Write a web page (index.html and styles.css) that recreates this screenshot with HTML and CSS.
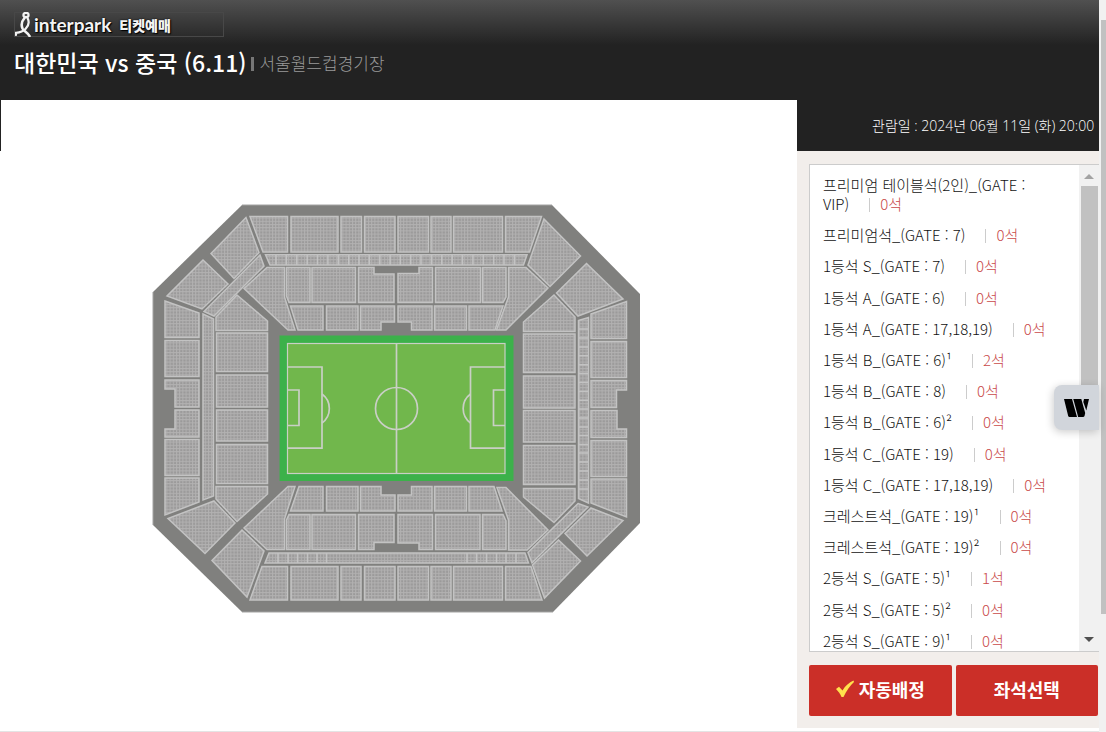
FILE: index.html
```html
<!DOCTYPE html>
<html lang="ko">
<head>
    <meta charset="UTF-8">
    <meta name="viewport" content="width=device-width, initial-scale=1.0">
    <title>인터파크 티켓예매</title>
    <link rel="stylesheet" href="styles.css">
</head>
<body>
    <div class="page">
        <header class="header">
            <a class="logo" href="#">
                <svg class="logo-mark" viewBox="0 0 18 25" aria-hidden="true">
                    <g fill="none" stroke="#f4f4f4" stroke-linecap="round">
                        <ellipse cx="11" cy="3" rx="2.600" ry="2.200" stroke-width="2.200"/>
                        <path d="M9.500 6C6.500 9.500 6 13 7.500 16.500C9 19.500 12.500 20 14.500 24" stroke-width="2.600"/>
                        <path d="M12.500 6C14.600 10 13.500 14 10.500 17C7.500 20.200 4.800 20.500 1 20.800V23" stroke-width="2.200"/>
                    </g>
                </svg>
                <span class="logo-name">interpark</span>
                <span class="logo-service">티켓예매</span>
            </a>
            <div class="title-row">
                <h1>대한민국 vs 중국 (6.11)</h1>
                <span class="venue">서울월드컵경기장</span>
            </div>
        </header>

        <div class="content">
            <main class="seat-map">
                <svg class="stadium" viewBox="152 204 489 409" role="img" aria-label="좌석 배치도">
                    <defs>
                        <pattern id="seats" width="3.200" height="3.200" patternUnits="userSpaceOnUse">
                            <rect width="3.200" height="3.200" fill="#9b9a9a"/>
                            <path d="M0 .5H3.200M.5 0V3.200" stroke="#b2b1b1" stroke-width="1"/>
                        </pattern>
                    </defs>
                    <path d="M242 205H552L640 294V523L553 612H242L153 525V292Z" fill="#80807e"/>
                    <path d="M242 205H552M153 292V525M242 612H553" stroke="#a3a3a2" fill="none"/>

                    <g fill="url(#seats)" stroke="#c3c3c3" stroke-width="1.500">
                        <!-- north stand -->
                        <path d="M250 216.500H287.500V252H263Z"/>
                        <path d="M291 216.500H338V252H291Z"/>
                        <path d="M341 216.500H361.500V252H341Z"/>
                        <path d="M364.500 216.500H395V252H364.500Z"/>
                        <path d="M398 216.500H428.500V252H398Z"/>
                        <path d="M431 216.500H451V252H431Z"/>
                        <path d="M453.500 216.500H502.500V252H453.500Z"/>
                        <path d="M505.500 216.500H541.500L529.500 252H505.500Z"/>
                        <path d="M265.500 254.800H527L523.500 265H270Z"/>
                        <path d="M276 255V265M286.400 255V265M296.800 255V265M307.200 255V265M317.500 255V265M327.900 255V265M338.300 255V265M348.700 255V265M359 255V265M369.400 255V265M379.800 255V265M390.100 255V265M400.300 255V265M410.700 255V265M421 255V265M431.400 255V265M441.800 255V265M452.200 255V265M462.500 255V265M472.900 255V265M483.300 255V265M493.700 255V265M504 255V265M514.400 255V265"/>
                        <path d="M267 267.500H284.500V297L295 330H288L244 288.500Z"/>
                        <path d="M286.500 267.500H310V302.500H289L286.500 296Z"/>
                        <path d="M312 267.500H355.500V302.500H312Z"/>
                        <path d="M358.500 267.500H374V274H394V302.500H358.500Z"/>
                        <path d="M398 273.500H419V267.500H432.500V302.500H398Z"/>
                        <path d="M435.500 267.500H480.500V302.500H435.500Z"/>
                        <path d="M482.500 267.500H506V297L503 302.500H482.500Z"/>
                        <path d="M508.500 267.500H526L548 288L506 330H496.500L508.500 297Z"/>
                        <path d="M290.500 306H323V330H298Z"/>
                        <path d="M326.500 306H358V330H326.500Z"/>
                        <path d="M360.500 306H394.500V322H381V330H360.500Z"/>
                        <path d="M398 306H432V330H411.500V322H398Z"/>
                        <path d="M434.500 306H466.500V330H434.500Z"/>
                        <path d="M469 306H503L495 330H469Z"/>

                        <!-- north-west and north-east corners -->
                        <path d="M246 217.500L211 253.500L234 278.500L259 252.500Z"/>
                        <path d="M203 260L167 296L202 309L228 284Z"/>
                        <path d="M260 255L204 311.500L214 316L264 266Z"/>
                        <path d="M544 219L580.500 256L550 286.500L528 265Z"/>
                        <path d="M586.500 263.500L623 299L578 316L556.500 293Z"/>

                        <!-- west stand -->
                        <path d="M165 301L199 313V337.500H165Z"/>
                        <path d="M165 340.500H199V376.500H165Z"/>
                        <path d="M165 380H199V407H175V389H165Z"/>
                        <path d="M175 410H199V437H165V429H175Z"/>
                        <path d="M165 439.500H199V475.500H165Z"/>
                        <path d="M165 478H199V502L165 515Z"/>
                        <path d="M203 314L213.500 319V496L203 500Z"/>
                        <path d="M237 295L267.500 321V330.500H216V317Z"/>
                        <path d="M216.500 333H267.500V371.500H216.500Z"/>
                        <path d="M216.500 375H267.500V407H216.500Z"/>
                        <path d="M216.500 410H267.500V441H216.500Z"/>
                        <path d="M216.500 444.500H267.500V483.500H216.500Z"/>
                        <path d="M216 486.500H267.500V494L237 521.500L216 499Z"/>

                        <!-- east stand -->
                        <path d="M591 314L626.500 301.500V338.500H591Z"/>
                        <path d="M591 341.500H626.500V377.500H591Z"/>
                        <path d="M591 380.500H626.500V390H616.500V407.500H591Z"/>
                        <path d="M591 410.500H617V429H626.500V437.500H591Z"/>
                        <path d="M591 440.500H626.500V476.500H591Z"/>
                        <path d="M591 479H626.500V517L591 503Z"/>
                        <path d="M578.500 320.500L588.500 317.500V503L578.500 498.500Z"/>
                        <path d="M578.500 329H588.500M578.500 338H588.500M578.500 347H588.500M578.500 355.800H588.500M578.500 364.700H588.500M578.500 373.600H588.500M578.500 382.500H588.500M578.500 391.400H588.500M578.500 400.300H588.500M578.500 409H588.500M578.500 418H588.500M578.500 427H588.500M578.500 435.500H588.500M578.500 444.500H588.500M578.500 453H588.500M578.500 462H588.500M578.500 471H588.500M578.500 480H588.500M578.500 489H588.500"/>
                        <path d="M554 295L575 317V331.500H523.500V322Z"/>
                        <path d="M523.500 334H575V372.500H523.500Z"/>
                        <path d="M523.500 376H575V408H523.500Z"/>
                        <path d="M523.500 410.500H575V442H523.500Z"/>
                        <path d="M523.500 445.500H575V484.500H523.500Z"/>
                        <path d="M523.500 488.500H575V501L554 522.500L523.500 497Z"/>

                        <!-- south-west and south-east corners -->
                        <path d="M214 501L235 523L205 553.500L168 518.500Z"/>
                        <path d="M242 530L264 551L247 597L212 560.500Z"/>
                        <path d="M578 503.500L588 507L532 563L528 552.500Z"/>
                        <path d="M591 508L623 520.500L587 556L565 533.500Z"/>
                        <path d="M558.500 540L580.500 561L544.500 598L532.500 565Z"/>

                        <!-- south stand -->
                        <path d="M299 486.500H323V511H290.500Z"/>
                        <path d="M326.500 486.500H358V511H326.500Z"/>
                        <path d="M360.500 486.500H381V495H395V511H360.500Z"/>
                        <path d="M398 495H411.500V486.500H432V511H398Z"/>
                        <path d="M434.500 486.500H466.500V511H434.500Z"/>
                        <path d="M469 486.500H494L502 511H469Z"/>
                        <path d="M288 486.500H295L284.500 519V549.500H267L244 528Z"/>
                        <path d="M289 514.500H310V549.500H286.500V520Z"/>
                        <path d="M312 514.500H355.500V549.500H312Z"/>
                        <path d="M358.500 514.500H394V542.500H374V549.500H358.500Z"/>
                        <path d="M398 514.500H432.500V549.500H419V543H398Z"/>
                        <path d="M435.500 514.500H480V549.500H435.500Z"/>
                        <path d="M482.500 514.500H503L506 521V549.500H482.500Z"/>
                        <path d="M497 487.500H506L548 530L527 550H508.500V520Z"/>
                        <path d="M269 553H525L528.500 563H265Z"/>
                        <path d="M278 553V563M288 553V563M297.500 553V563M307.500 553V563M317 553V563M326.500 553V563M467 553V563M476.500 553V563M486.500 553V563M496.500 553V563M506 553V563M516 553V563"/>
                        <path d="M262 566.500H287.500V600H250Z"/>
                        <path d="M291 566.500H338V600H291Z"/>
                        <path d="M341 566.500H361V600H341Z"/>
                        <path d="M364.500 566.500H395V600H364.500Z"/>
                        <path d="M398 566.500H428.500V600H398Z"/>
                        <path d="M431 566.500H451V600H431Z"/>
                        <path d="M453.500 566.500H502.500V600H453.500Z"/>
                        <path d="M505.500 566.500H531L542 600H505.500Z"/>
                    </g>

                    <!-- pitch -->
                    <rect x="279.500" y="335.500" width="234" height="145.500" fill="#3cb14a"/>
                    <g fill="none" stroke="#c9cfc5" stroke-width="1.700">
                        <rect x="287.500" y="343.500" width="217.500" height="130" fill="#71b74c" stroke-width="1.200"/>
                        <path d="M396.500 343.500V473.500"/>
                        <circle cx="396.500" cy="408.500" r="21"/>
                        <path d="M287.500 367H322V448.200H287.500M287.500 390H299V425.500H287.500"/>
                        <path d="M505 367H470.500V448.200H505M505 390H493.500V425.500H505"/>
                        <path d="M322 394A18 18 0 0 1 322 423M470.500 394A18 18 0 0 0 470.500 423"/>
                    </g>
                </svg>
            </main>

            <aside class="sidebar">
                <p class="date">관람일 : 2024년 06월 11일 (화) 20:00</p>
                <div class="panel">
                    <div class="grade-box">
                        <ul class="grades">
                            <li><a href="#">프리미엄 테이블석(2인)_(GATE : VIP)<span class="count">0석</span></a></li>
                            <li><a href="#">프리미엄석_(GATE : 7)<span class="count">0석</span></a></li>
                            <li><a href="#">1등석 S_(GATE : 7)<span class="count">0석</span></a></li>
                            <li><a href="#">1등석 A_(GATE : 6)<span class="count">0석</span></a></li>
                            <li><a href="#">1등석 A_(GATE : 17,18,19)<span class="count">0석</span></a></li>
                            <li><a href="#">1등석 B_(GATE : 6)¹<span class="count">2석</span></a></li>
                            <li><a href="#">1등석 B_(GATE : 8)<span class="count">0석</span></a></li>
                            <li><a href="#">1등석 B_(GATE : 6)²<span class="count">0석</span></a></li>
                            <li><a href="#">1등석 C_(GATE : 19)<span class="count">0석</span></a></li>
                            <li><a href="#">1등석 C_(GATE : 17,18,19)<span class="count">0석</span></a></li>
                            <li><a href="#">크레스트석_(GATE : 19)¹<span class="count">0석</span></a></li>
                            <li><a href="#">크레스트석_(GATE : 19)²<span class="count">0석</span></a></li>
                            <li><a href="#">2등석 S_(GATE : 5)¹<span class="count">1석</span></a></li>
                            <li><a href="#">2등석 S_(GATE : 5)²<span class="count">0석</span></a></li>
                            <li><a href="#">2등석 S_(GATE : 9)¹<span class="count">0석</span></a></li>
                        </ul>
                        <div class="list-scroll">
                            <span class="arrow-up"></span>
                            <span class="list-thumb"></span>
                            <span class="arrow-down"></span>
                        </div>
                    </div>
                    <div class="actions">
                        <button type="button">
                            <svg class="check" viewBox="0 0 18 18" aria-hidden="true"><path d="M0 9L3 6.800L6.500 10.500C9.500 5.500 13 2.500 17.500 .5L18 2C14 6 10.500 10.500 7.500 17H5.500C4.300 14 2.500 11.500 0 9Z" fill="#ffe14d"/></svg>
                            자동배정
                        </button>
                        <button type="button">좌석선택</button>
                    </div>
                </div>
            </aside>
        </div>
    </div>

    <div class="page-scroll">
        <span class="page-thumb"></span>
    </div>

    <button class="widget" type="button" aria-label="위젯 열기">
        <svg viewBox="0 0 25 18" aria-hidden="true"><path d="M0 0H8L13 18H5.500Q4.500 18 4.200 17ZM9.300 0H17.300L21.200 14L20.500 17Q20.200 18 19 18H14.200ZM19.300 3L20 0H25L22.300 11.500Z"/></svg>
    </button>
</body>
</html>
```

FILE: styles.css
```css
* {
    box-sizing: border-box;
}
body {
    display: flex;
    height: 100vh;
    margin: 0;
    overflow: hidden;
    font-family: "Noto Sans CJK KR", sans-serif;
    font-size: 15px;
    font-weight: 300;
    color: #111;
}
a {
    color: inherit;
    text-decoration: none;
}
.page {
    flex: 1;
    min-width: 0;
    display: flex;
    flex-direction: column;
    padding-bottom: 3px;
    border-bottom: 1px solid #e4e4e4;
    background: linear-gradient(#505050, #222 45px, #222 151px, #fff 151px);
}

/* header */
.header {
    height: 100px;
    padding: 12px 14px 0;
}
.logo {
    display: flex;
    align-items: center;
    width: 210px;
    height: 25px;
    border: 1px solid #484848;
    color: #f4f4f4;
    line-height: 24px;
    text-shadow: 0 0 2px #000, 1px 1px 1px #000;
}
.logo-mark {
    width: 18px;
    height: 25px;
    margin-right: 1px;
}
.logo-name {
    font-family: Lato, sans-serif;
    font-size: 19px;
    font-weight: 700;
}
.logo-service {
    margin-left: 8px;
    font-size: 14px;
    font-weight: 900;
}
.title-row {
    display: flex;
    align-items: center;
    height: 50px;
}
h1 {
    margin: 0;
    font-size: 23px;
    font-weight: 500;
    color: #fff;
}
.venue {
    display: flex;
    align-items: center;
    margin-left: 5px;
    font-size: 17px;
    color: #999;
}
.venue::before {
    content: "";
    width: 3px;
    height: 14px;
    margin: 4px 5px 0 0;
    background: #777;
}

/* stadium */
.content {
    flex: 1;
    min-height: 0;
    display: flex;
}
.seat-map {
    flex: 1;
    margin-left: 1px;
    padding: 104px 5px 0 0;
    background: #fff;
    text-align: center;
}
.stadium {
    width: 100%;
    max-width: 489px;
}

/* sidebar */
.sidebar {
    width: 302px;
    display: flex;
    flex-direction: column;
}
.date {
    height: 51px;
    margin: 0;
    padding-left: 75px;
    font-family: "Open Sans", "Noto Sans CJK KR", sans-serif;
    font-size: 14px;
    line-height: 51px;
    white-space: nowrap;
    color: #fff;
    background: #222;
}
.panel {
    flex: 1;
    min-height: 0;
    display: flex;
    flex-direction: column;
    gap: 13px;
    padding: 13px 0 12px 12px;
    background: #f2eeeb;
}
.grade-box {
    flex: 1;
    min-height: 0;
    display: flex;
    border: 1px solid #ccc;
    border-right: 0;
    background: #fff;
}
.grades {
    flex: 1;
    display: flex;
    flex-direction: column;
    justify-content: space-between;
    margin: 0;
    padding: 10px 28px 1px 13px;
    overflow: hidden;
    list-style: none;
    line-height: 19px;
}
.count {
    display: inline-block;
    color: #c94a4a;
}
.count::before {
    content: "";
    display: inline-block;
    width: 1px;
    height: 14px;
    margin: 0 10px 0 20px;
    vertical-align: -2px;
    background: #ccc;
}
.list-scroll {
    width: 20px;
    display: flex;
    flex-direction: column;
    align-items: center;
    padding: 9px 0 9px;
    background: #f1f1f1;
}
.arrow-up,
.arrow-down {
    border: 5px solid transparent;
}
.arrow-up {
    border-top: 0;
    border-bottom-color: #a3a3a3;
}
.arrow-down {
    margin-top: auto;
    border-bottom: 0;
    border-top-color: #505050;
}
.list-thumb {
    width: 17px;
    height: 220px;
    margin-top: 7px;
    background: #c1c1c1;
}
.actions {
    display: flex;
    gap: 4px;
    padding-right: 1px;
}
.actions button {
    flex: 1;
    display: flex;
    align-items: center;
    justify-content: center;
    gap: 5px;
    height: 51px;
    padding: 0 0 3px;
    border: 0;
    border-radius: 2px;
    background: #cb2f28;
    color: #fff;
    font-family: inherit;
    font-size: 18px;
    font-weight: 700;
    cursor: pointer;
}
.actions button:hover {
    background: #b52620;
}
.check {
    width: 18px;
    height: 18px;
}

/* window scrollbar */
.page-scroll {
    width: 7px;
    padding: 20px 0 0 2px;
    background: #f1f1f1;
}
.page-thumb {
    display: block;
    height: 594px;
    background: #c1c1c1;
}

/* floating button over the list */
.widget {
    position: absolute;
    top: 385px;
    right: 7px;
    display: flex;
    align-items: center;
    justify-content: center;
    width: 45px;
    height: 45px;
    padding: 0;
    border: 0;
    border-radius: 8px 0 0 8px;
    background: #d1d5db;
    box-shadow: -1px 2px 8px rgba(0, 0, 0, 0.2);
    cursor: pointer;
}
.widget svg {
    width: 25px;
    height: 18px;
}
```
